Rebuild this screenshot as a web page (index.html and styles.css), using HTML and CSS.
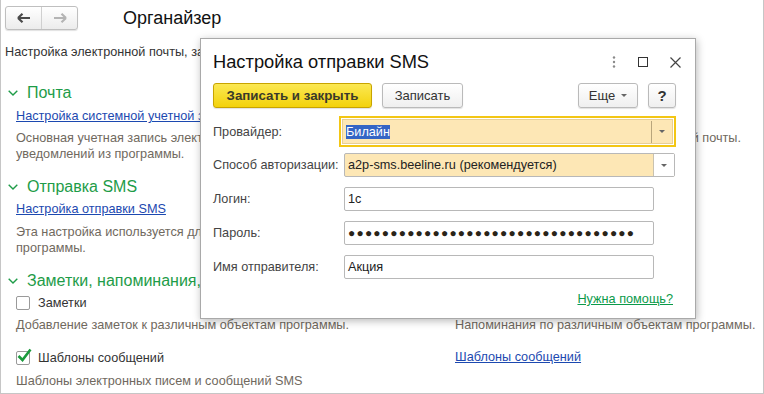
FILE: index.html
```html
<!DOCTYPE html>
<html lang="ru">
<head>
<meta charset="utf-8">
<link rel="stylesheet" href="styles.css">
</head>
<body>
<div class="page">
  <div class="topbar">
    <div class="navgroup">
      <span class="navbtn">
        <svg width="14" height="10" viewBox="0 0 14 10"><path d="M1 5H13M1 5L5.5 0.8M1 5L5.5 9.2" stroke="#4a4a4a" stroke-width="2.2" fill="none"/></svg>
      </span>
      <span class="navbtn">
        <svg width="14" height="10" viewBox="0 0 14 10"><path d="M1 5H13M13 5L8.5 0.8M13 5L8.5 9.2" stroke="#b4b4b4" stroke-width="2.2" fill="none"/></svg>
      </span>
    </div>
    <div class="apptitle">Органайзер</div>
  </div>

  <div class="intro">Настройка электронной почты, заметок, напоминаний и шаблонов сообщений.</div>

  <div class="sec">
    <div class="sechead"><svg class="chev" width="10" height="6" viewBox="0 0 10 6"><path d="M0.7 0.7L5 5L9.3 0.7" stroke="#1e9c48" stroke-width="1.4" fill="none"/></svg>Почта</div>
    <div class="item">
      <a class="link">Настройка системной учетной записи</a>
      <div class="desc">
        <div class="descline"><span>Основная учетная запись электронной почты, используемая для</span><span>отправки и получения электронной почты.</span></div>
        <div>уведомлений из программы.</div>
      </div>
    </div>
  </div>

  <div class="sec sec2">
    <div class="sechead"><svg class="chev" width="10" height="6" viewBox="0 0 10 6"><path d="M0.7 0.7L5 5L9.3 0.7" stroke="#1e9c48" stroke-width="1.4" fill="none"/></svg>Отправка SMS</div>
    <div class="item">
      <a class="link">Настройка отправки SMS</a>
      <div class="desc">Эта настройка используется для отправки SMS из<br>программы.</div>
    </div>
  </div>

  <div class="sec sec3">
    <div class="sechead"><svg class="chev" width="10" height="6" viewBox="0 0 10 6"><path d="M0.7 0.7L5 5L9.3 0.7" stroke="#1e9c48" stroke-width="1.4" fill="none"/></svg>Заметки, напоминания, шаблоны сообщений</div>
    <div class="grid">
      <div class="cell">
        <label class="check"><span class="box"></span>Заметки</label>
        <div class="desc">Добавление заметок к различным объектам программы.</div>
      </div>
      <div class="cell">
        <label class="check"><span class="box"></span>Напоминания</label>
        <div class="desc">Напоминания по различным объектам программы.</div>
      </div>
      <div class="cell cell-row2">
        <label class="check"><span class="box checked"><svg width="16" height="15" viewBox="0 0 16 15"><path d="M2.5 8L6.5 12L14.5 1.5" stroke="#1a9a3c" stroke-width="2.6" fill="none"/></svg></span>Шаблоны сообщений</label>
        <div class="desc">Шаблоны электронных писем и сообщений SMS</div>
      </div>
      <div class="cell cell-row2">
        <a class="link">Шаблоны сообщений</a>
      </div>
    </div>
  </div>

  <div class="dialog">
    <div class="dlghead">
      <div class="dlgtitle">Настройка отправки SMS</div>
      <div class="dlgicons">
        <svg width="4" height="12" viewBox="0 0 4 12"><circle cx="2" cy="1.5" r="1.2" fill="#8a8a8a"/><circle cx="2" cy="6" r="1.2" fill="#8a8a8a"/><circle cx="2" cy="10.5" r="1.2" fill="#8a8a8a"/></svg>
        <svg width="10" height="10" viewBox="0 0 10 10"><rect x="0.5" y="0.5" width="9" height="9" stroke="#333" fill="none"/></svg>
        <svg width="11" height="11" viewBox="0 0 11 11"><path d="M0.5 0.5L10.5 10.5M10.5 0.5L0.5 10.5" stroke="#444" stroke-width="1.2"/></svg>
      </div>
    </div>
    <div class="toolbar">
      <button class="btn btn-primary">Записать и закрыть</button>
      <button class="btn btn-save">Записать</button>
      <span class="spacer"></span>
      <button class="btn btn-more">Еще <span class="caret"></span></button>
      <button class="btn btn-help">?</button>
    </div>
    <div class="form">
      <div class="row row-provider">
        <span class="lbl">Провайдер:</span>
        <div class="focusring">
          <div class="field field-yellow field-wide">
            <span class="val"><span class="sel">Билайн</span></span>
            <span class="drop"><span class="caret"></span></span>
          </div>
        </div>
      </div>
      <div class="row row-auth">
        <span class="lbl">Способ авторизации:</span>
        <div class="field field-yellow field-wide">
          <span class="val">a2p-sms.beeline.ru (рекомендуется)</span>
          <span class="drop"><span class="caret"></span></span>
        </div>
      </div>
      <div class="row row-text">
        <span class="lbl">Логин:</span>
        <div class="field field-text"><span class="val">1с</span></div>
      </div>
      <div class="row row-text">
        <span class="lbl">Пароль:</span>
        <div class="field field-text"><span class="val dots">●●●●●●●●●●●●●●●●●●●●●●●●●●●●●●●●●●</span></div>
      </div>
      <div class="row row-text">
        <span class="lbl">Имя отправителя:</span>
        <div class="field field-text"><span class="val">Акция</span></div>
      </div>
      <div class="helprow"><a class="helplink">Нужна помощь?</a></div>
    </div>
  </div>
</div>
</body>
</html>
```

FILE: styles.css
```css
* { box-sizing: border-box; }
html, body { margin: 0; padding: 0; background: #fff; }
body {
  font-family: "Liberation Sans", Arial, sans-serif;
  font-size: 12.7px;
  color: #333;
}
.page {
  position: relative;
  width: 764px;
  height: 394px;
  overflow: hidden;
  border-left: 1px solid #c6c6c6;
  border-right: 1px solid #c6c6c6;
  border-bottom: 1px solid #c6c6c6;
}
.topbar {
  display: flex;
  height: 36px;
  padding: 6px 0 0 4px;
  align-items: flex-start;
}
.navgroup {
  display: flex;
  width: 73px;
  height: 24px;
  border: 1px solid #bfbfbf;
  border-radius: 3px;
  background: linear-gradient(#ffffff, #ececec);
  box-shadow: 0 1px 1px rgba(0,0,0,0.12);
}
.navbtn {
  flex: 1;
  display: flex;
  align-items: center;
  justify-content: center;
}
.navbtn + .navbtn { border-left: 1px solid #d0d0d0; }
.apptitle {
  margin-left: 45px;
  font-size: 18px;
  line-height: 24px;
  color: #111;
}
.intro {
  margin-top: 8px;
  padding-left: 4px;
  line-height: 17px;
  color: #333;
  white-space: nowrap;
}
.sec { padding-left: 7px; }
.sechead {
  display: flex;
  align-items: center;
  margin-top: 21px;
  height: 22px;
  font-size: 16px;
  color: #1e9c48;
  white-space: nowrap;
}
.chev { margin-right: 9px; margin-left: 0; }
.item { padding-left: 8px; }
.link {
  display: inline-block;
  margin-top: 4px;
  line-height: 17px;
  color: #1c49b0;
  text-decoration: underline;
  white-space: nowrap;
}
.desc {
  margin-top: 5px;
  line-height: 16px;
  color: #70695e;
  white-space: nowrap;
}
.descline {
  display: flex;
  justify-content: space-between;
  width: 725px;
  overflow: hidden;
}
.sec2 .sechead { margin-top: 14px; }
.sec2 .link { margin-top: 3px; }
.sec2 .desc { margin-top: 6px; }
.sec3 .sechead { margin-top: 14px; }
.grid {
  display: grid;
  grid-template-columns: 439px 1fr;
  padding-left: 8px;
}
.check {
  display: flex;
  align-items: center;
  margin-top: 2px;
  height: 17px;
  color: #333;
  white-space: nowrap;
}
.box {
  position: relative;
  width: 14px;
  height: 14px;
  margin-right: 8px;
  border: 1px solid #9a9a9a;
  border-radius: 2px;
  background: #fff;
}
.box svg { position: absolute; left: -1px; top: -4px; }
.cell .desc { margin-top: 6px; }
.cell-row2 .check { margin-top: 16px; }
.cell-row2 .desc { margin-top: 7px; }
.cell-row2 .link { margin-top: 16px; }

/* dialog */
.dialog {
  position: absolute;
  left: 199px;
  top: 38px;
  width: 496px;
  height: 281px;
  background: #fff;
  border: 1px solid #a9a9a9;
  box-shadow: 1px 2px 8px rgba(0,0,0,0.28);
  padding: 0 19px 0 12px;
}
.dlghead {
  display: flex;
  align-items: center;
  justify-content: space-between;
  height: 44px;
  padding-top: 2px;
}
.dlgtitle { font-size: 18.3px; color: #111; white-space: nowrap; }
.dlgicons {
  display: flex;
  align-items: center;
  gap: 22px;
  margin-right: -5px;
}
.toolbar {
  display: flex;
  align-items: center;
  height: 25px;
}
.btn {
  height: 25px;
  font-family: inherit;
  font-size: 13px;
  color: #333;
  border: 1px solid #bababa;
  border-radius: 3px;
  background: linear-gradient(#ffffff, #efefef);
  box-shadow: 0 1px 1px rgba(0,0,0,0.12);
  padding: 0;
  display: flex;
  align-items: center;
  justify-content: center;
}
.btn-primary {
  width: 159px;
  font-weight: bold;
  font-size: 13.3px;
  background: linear-gradient(#fbe853, #f3d20c);
  border-color: #c8a400;
  color: #3a3a2a;
}
.btn-save { width: 81px; margin-left: 10px; }
.spacer { flex: 1; }
.btn-more { width: 60px; gap: 6px; }
.btn-help { width: 28px; margin-left: 10px; font-size: 15px; font-weight: bold; color: #333; }
.caret {
  display: inline-block;
  width: 0; height: 0;
  border-left: 3px solid transparent;
  border-right: 3px solid transparent;
  border-top: 3px solid #666;
}
.form { margin-top: 8px; }
.row {
  display: flex;
  align-items: center;
}
.lbl {
  width: 131px;
  color: #444;
  white-space: nowrap;
}
.focusring {
  margin-left: -3px;
  padding: 1px;
  border: 2px solid #f3c614;
  width: 338px;
  height: 31px;
}
.field {
  display: flex;
  align-items: center;
  height: 24px;
  border: 1px solid #b8b8b8;
  border-radius: 2px;
  background: #fff;
}
.row-provider .field { height: 25px; border-color: #e7cf95; border-radius: 0; }
.field-yellow { background: #fde7b5; }
.field-wide { width: 331px; }
.field-text { width: 310px; }
.val {
  flex: 1;
  padding-left: 3px;
  white-space: nowrap;
  color: #222;
}
.sel { background: #3465c5; color: #fff; }
.drop {
  width: 21px;
  height: 100%;
  border-left: 1px solid #c8b88f;
  display: flex;
  align-items: center;
  justify-content: center;
  background: #fff;
}
.row-provider .drop { background: #fde7b5; border-left-color: #b9a67c; height: 22px; }
.row-auth { margin-top: 6px; }
.row-auth .drop { border-left-color: #c9c2b0; }
.row-text { margin-top: 10px; }
.dots {
  font-size: 12px;
  letter-spacing: 1.2px;
  color: #2a2418;
}
.helprow {
  display: flex;
  justify-content: flex-end;
  margin-top: 12px;
}
.helplink {
  color: #0b9a4a;
  text-decoration: underline;
  line-height: 16px;
  margin-right: 3px;
}
```
